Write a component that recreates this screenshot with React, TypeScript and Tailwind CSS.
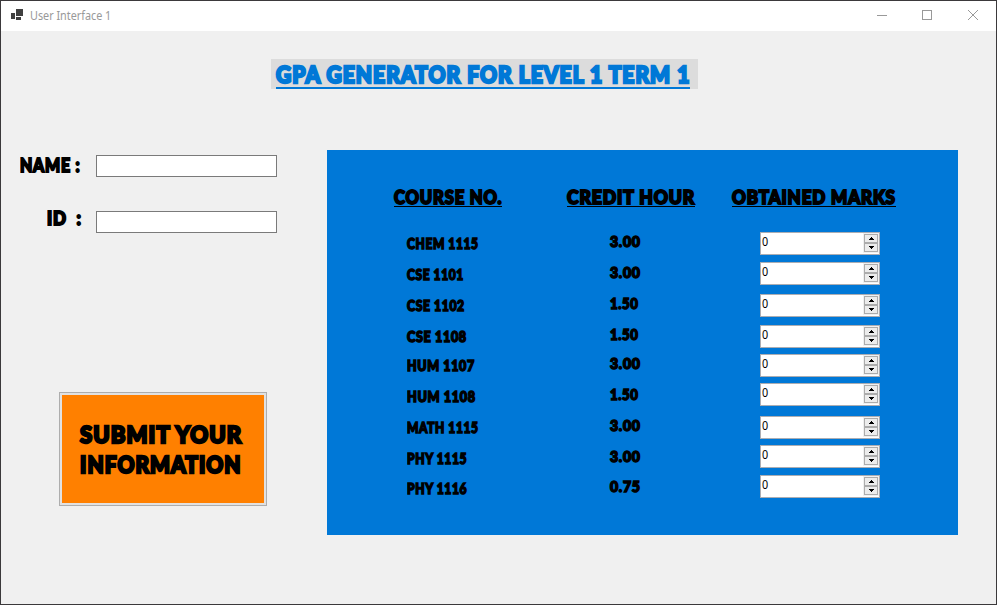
import { useLayoutEffect, useRef, useState } from "react";

type FitProps = { text: string; width: number; className?: string };

// Display lettering condensed horizontally to a fixed measure.
function Display({ text, width, className = "" }: FitProps) {
  const ref = useRef<HTMLSpanElement>(null);
  const [scale, setScale] = useState(1);
  useLayoutEffect(() => {
    if (ref.current) setScale(width / ref.current.offsetWidth);
  }, [text, width]);
  return (
    <div className={`overflow-visible ${className}`} style={{ width }}>
      <span
        ref={ref}
        className="inline-block origin-left whitespace-pre align-top font-['Lato','Liberation_Sans',sans-serif] font-black leading-none tracking-[0.05em] [-webkit-text-stroke:0.105em_currentColor]"
        style={{ transform: `scaleX(${scale})` }}
      >
        {text}
      </span>
    </div>
  );
}

const courses = [
  { name: "CHEM 1115", width: 72, credit: "3.00", row: "h-[31px]", field: "h-[30px]" },
  { name: "CSE 1101", width: 57, credit: "3.00", row: "h-[31px]", field: "h-[32px]" },
  { name: "CSE 1102", width: 58, credit: "1.50", row: "h-[31px]", field: "h-[31px]" },
  { name: "CSE 1108", width: 60, credit: "1.50", row: "h-[29px]", field: "h-[29px]" },
  { name: "HUM 1107", width: 68, credit: "3.00", row: "h-[31px]", field: "h-[29px]" },
  { name: "HUM 1108", width: 69, credit: "1.50", row: "h-[31px]", field: "h-[33px]" },
  { name: "MATH 1115", width: 72, credit: "3.00", row: "h-[31px]", field: "h-[29px]" },
  { name: "PHY 1115", width: 60, credit: "3.00", row: "h-[30px]", field: "h-[30px]" },
  { name: "PHY 1116", width: 60, credit: "0.75", row: "h-[30px]", field: "h-[30px]" },
];

function Spinner() {
  return (
    <div className="flex h-[23px] w-[120px] justify-between border border-[#abadb3] bg-white">
      <span className="origin-left scale-x-90 pl-px pt-[2px] font-['Noto_Sans',sans-serif] text-[12px] leading-[14px] text-black">0</span>
      <div className="flex h-[20px] w-4 flex-col bg-[#f0f0f0] pl-px pr-px pt-px">
        <button className="flex h-[9px] items-center justify-center border border-[#acacac] bg-[#ececec]">
          <svg width="5" height="3" shapeRendering="crispEdges"><path d="M2 0h1v1H2zM1 1h3v1H1zM0 2h5v1H0z" /></svg>
        </button>
        <button className="flex h-[9px] items-center justify-center border border-[#acacac] bg-[#ececec]">
          <svg width="5" height="3" shapeRendering="crispEdges"><path d="M0 0h5v1H0zM1 1h3v1H1zM2 2h1v1H2z" /></svg>
        </button>
      </div>
    </div>
  );
}

export default function App() {
  return (
    <div className="flex h-[605px] w-[997px] flex-col overflow-hidden border border-[#3b393b] bg-[#f0f0f0] text-black">
      <header className="flex h-[30px] shrink-0 items-center bg-white pl-[10px]">
        <svg width="12" height="11" className="-mt-[3px]" shapeRendering="crispEdges" fill="#404040">
          <path d="M5 0h7v7H5zM0 4h4v6H0zM5 8h5v3H5z" />
        </svg>
        <span className="ml-[7px] origin-left scale-x-90 font-['Noto_Sans',sans-serif] text-[12px] text-[#999]">User Interface 1</span>
        <div className="ml-auto mr-[18px] flex -translate-y-px gap-[35px]">
          <svg width="10" height="10" className="-translate-x-px" stroke="#999" fill="none" shapeRendering="crispEdges"><path d="M0 5.5h10" /></svg>
          <svg width="10" height="10" className="-translate-x-px" stroke="#999" fill="none" shapeRendering="crispEdges"><path d="M.5.5h9v9h-9z" /></svg>
          <svg width="10" height="10" stroke="#999" fill="none"><path d="M0 0l10 10M10 0L0 10" /></svg>
        </div>
      </header>

      <div className="ml-[270px] mt-[28px] h-[30px] w-[427px] shrink-0 bg-[#dcdcdc] pl-[5px] pt-[3px] text-[23px] text-[#0078d7]">
        <Display text="GPA GENERATOR FOR LEVEL 1 TERM 1" width={414} className="h-[27px] border-b-2 border-[#0078d7] pt-px" />
      </div>

      <main className="mt-[61px] flex">
        <section className="w-[326px] pt-[5px]">
          <div className="flex h-[22px] pl-[19px] text-[18px]">
            <Display text="NAME :" width={60} className="pt-px" />
            <input className="ml-4 h-[22px] w-[181px] border border-[#7a7a7a] bg-white" />
          </div>
          <div className="mt-[34px] flex h-[22px] pl-[46px] text-[18px]">
            <Display text="ID  :" width={35} className="-mt-[2px]" />
            <input className="ml-[14px] h-[22px] w-[181px] border border-[#7a7a7a] bg-white" />
          </div>
          <button className="ml-[58px] mt-[159px] flex h-[114px] w-[208px] flex-col items-start border border-[#adadad] bg-[#e1e1e1] p-[2px] text-left text-[23px]">
            <span className="flex h-full w-full flex-col bg-[#ff8000] pl-[18px] pt-[28px]">
              <Display text="SUBMIT YOUR" width={162} className="h-[30px]" />
              <Display text="INFORMATION" width={162} className="h-[30px]" />
            </span>
          </button>
        </section>

        <section className="h-[385px] w-[631px] bg-[#0078d7]">
          <div className="flex h-[57px] pl-[67px] pt-[36px] text-[18px]">
            <Display text="COURSE NO." width={108} className="h-[21px] border-b border-black pt-[2px]" />
            <Display text="CREDIT HOUR" width={128} className="ml-[65px] h-[21px] border-b border-black pt-[2px]" />
            <Display text="OBTAINED MARKS" width={164} className="ml-[37px] h-[21px] border-b border-black pt-[2px]" />
          </div>
          <div className="flex pl-[80px] pt-[25px] text-[14.5px]">
            <div className="w-[203px] pt-[5px]">
              {courses.map((c) => (
                <div key={c.name} className={c.row}><Display text={c.name} width={c.width} /></div>
              ))}
            </div>
            <div className="w-[150px] pt-[3px]">
              {courses.map((c) => (
                <div key={c.name} className={c.row}><Display text={c.credit} width={c.credit === "1.50" ? 29 : 31} /></div>
              ))}
            </div>
            <div>
              {courses.map((c) => (
                <div key={c.name} className={c.field}><Spinner /></div>
              ))}
            </div>
          </div>
        </section>
      </main>
    </div>
  );
}
